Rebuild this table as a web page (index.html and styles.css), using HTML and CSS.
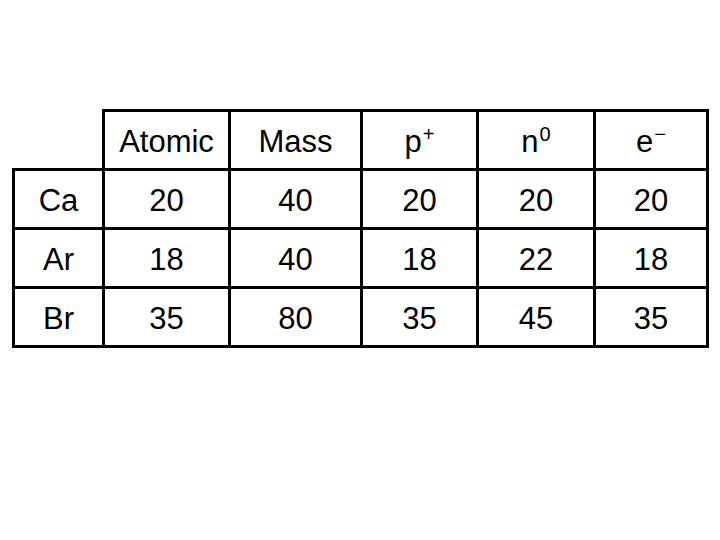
FILE: index.html
```html
<!DOCTYPE html>
<html lang="en">
<head>
<meta charset="utf-8">
<title>Atoms table</title>
<link rel="stylesheet" href="styles.css">
</head>
<body>
<main class="page">
  <table class="atoms">
    <colgroup>
      <col class="c1"><col class="c2"><col class="c3"><col class="c4"><col class="c5"><col class="c6">
    </colgroup>
    <thead>
      <tr>
        <th class="corner"></th>
        <th>Atomic</th>
        <th>Mass</th>
        <th>p<sup>+</sup></th>
        <th>n<sup>0</sup></th>
        <th>e<sup>−</sup></th>
      </tr>
    </thead>
    <tbody>
      <tr><td>Ca</td><td>20</td><td>40</td><td>20</td><td>20</td><td>20</td></tr>
      <tr><td>Ar</td><td>18</td><td>40</td><td>18</td><td>22</td><td>18</td></tr>
      <tr><td>Br</td><td>35</td><td>80</td><td>35</td><td>45</td><td>35</td></tr>
    </tbody>
  </table>
</main>
</body>
</html>
```
FILE: styles.css
```css
html, body {
  margin: 0;
  padding: 0;
  background: #ffffff;
}

.page {
  padding: 109px 0 0 12px;
}

.atoms {
  border-collapse: collapse;
  table-layout: fixed;
  font-family: "Liberation Sans", Arial, sans-serif;
  font-size: 31px;
  color: #000000;
}

.c1 { width: 90px; }
.c2 { width: 126px; }
.c3 { width: 132px; }
.c4 { width: 116px; }
.c5 { width: 117px; }
.c6 { width: 113px; }

.atoms th,
.atoms td {
  border: 3px solid #000000;
  padding: 3px 0 0 0;
  height: 53px;
  text-align: center;
  vertical-align: middle;
  font-weight: normal;
}

.atoms th.corner {
  border-top: none;
  border-left: none;
}

.atoms sup {
  font-size: 20px;
  line-height: 0;
  vertical-align: 11px;
  margin-left: 1px;
}
```
